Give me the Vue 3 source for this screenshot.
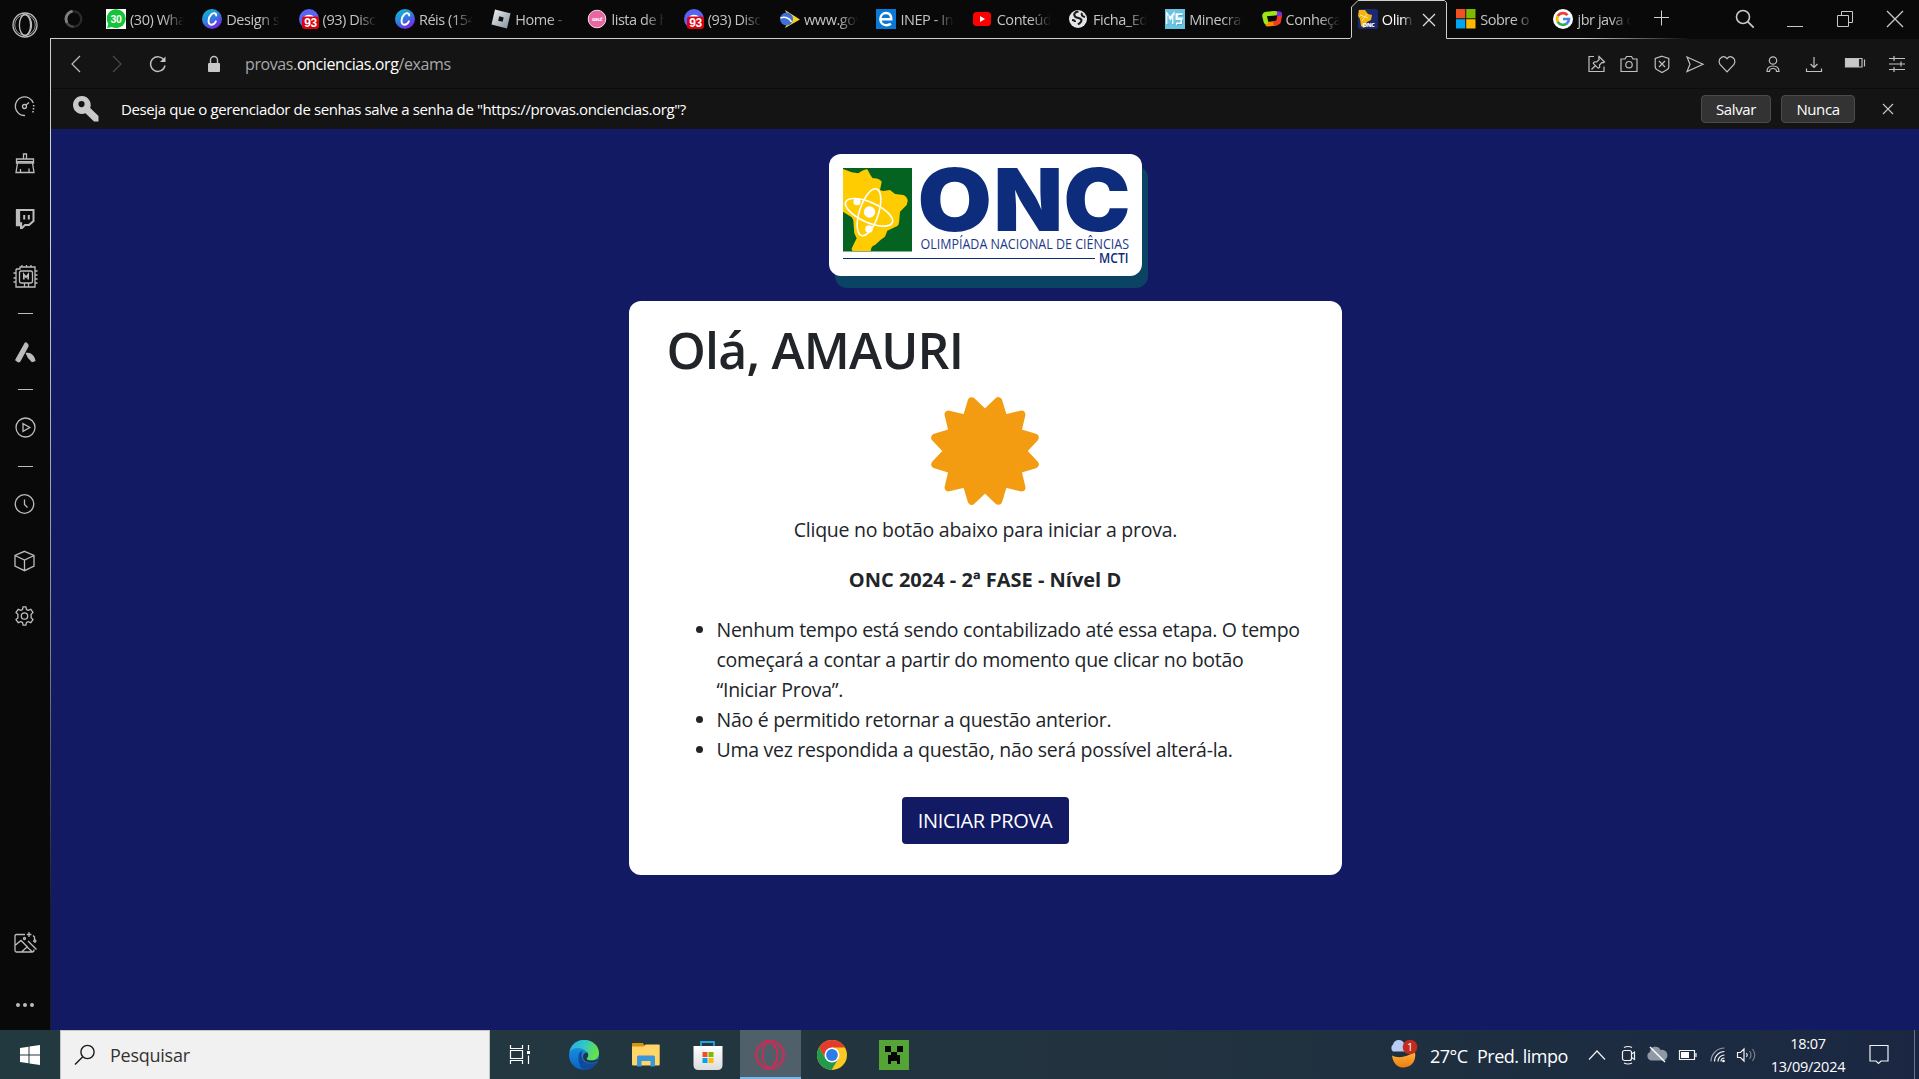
<script setup>
const tabs = [
  { icon: 'spinner', text: '', pinned: true },
  { icon: 'whats', text: '(30) Wha' },
  { icon: 'canva', text: 'Design s' },
  { icon: 'discord', text: '(93) Disc' },
  { icon: 'canva', text: 'Réis (154' },
  { icon: 'roblox', text: 'Home -' },
  { icon: 'osu', text: 'lista de h' },
  { icon: 'discord', text: '(93) Disc' },
  { icon: 'gov', text: 'www.gov' },
  { icon: 'inep', text: 'INEP - In' },
  { icon: 'youtube', text: 'Conteúd' },
  { icon: 'globe', text: 'Ficha_Ed' },
  { icon: 'ms', text: 'Minecraf' },
  { icon: 'conheca', text: 'Conheça' },
  { icon: 'onc', text: 'Olim', active: true },
  { icon: 'microsoft', text: 'Sobre o', late: true },
  { icon: 'google', text: 'jbr java d', last: true },
]

const canva = '<rect width="20" height="20" rx="10" fill="url(#cv)"/><path d="M14.200 6.500c.2-2.600-2.800-3.200-5-1C6 8.500 5.300 15.800 9.300 15.800c2.200 0 3.700-1.600 4.600-3.500" fill="none" stroke="#fff" stroke-width="1.900" stroke-linecap="round"/>'

const favicons = {
  spinner: '<circle cx="9.500" cy="10" r="7.800" fill="none" stroke="#2a2a2a" stroke-width="2.400"/><path d="M8.500 2.300a7.800 7.800 0 0 0 1 15.500" fill="none" stroke="#484848" stroke-width="2.600"/><path d="M8.500 2.300a7.800 7.800 0 0 0-5.500 11.500" fill="none" stroke="#808080" stroke-width="2.600"/>',
  whats: '<path d="M0 0h20v20H0z" fill="#fff"/><path d="M1 19l1.300-4.300A9.300 9.300 0 1 1 6 18z" fill="#16c43a"/><circle cx="10.300" cy="9.700" r="9.300" fill="#16c43a"/><text x="10" y="13.700" text-anchor="middle" font-family="Liberation Sans,sans-serif" font-weight="700" font-size="10.500" fill="#fff">30</text>',
  canva,
  discord: '<circle cx="10" cy="10" r="10" fill="#5865f2"/><path d="M5 8c2-3 8-3 10 0z" fill="#fff"/><rect x="3" y="7.500" width="17" height="12.500" rx="3" fill="#e00010"/><text x="11.500" y="17.700" text-anchor="middle" font-family="Liberation Sans,sans-serif" font-weight="700" font-size="12" fill="#fff">93</text>',
  roblox: '<path d="M4 .5l15.500 3.800L16 19.500.500 15.500z" fill="url(#rb)"/><path d="M8.300 7.300l4.400 1.100-1.100 4.400-4.400-1.100z" fill="#111"/>',
  osu: '<circle cx="10" cy="10" r="8.800" fill="#e967a1" stroke="#f6dbe8" stroke-width="1"/><text x="10" y="12" text-anchor="middle" font-family="Open Sans,sans-serif" font-weight="700" font-size="5.800" fill="#fff">osu!</text>',
  gov: '<path d="M5 1l15 9.500L5 19l4-9z" fill="#f5d328"/><circle cx="6.500" cy="10" r="6.500" fill="#3f6fd8"/><path d="M.5 9c4-1.800 9-.5 11 4" fill="none" stroke="#fff" stroke-width="1.600"/>',
  inep: '<path d="M0 0h20v20H0z" fill="#0a78d6"/><path d="M4.500 10.300h10.800c0-4.300-2.300-6.300-5.200-6.300-3.400 0-5.800 2.600-5.800 6 0 3.700 2.500 6.200 6.200 6.200 1.700 0 3.200-.5 4.400-1.400" fill="none" stroke="#fff" stroke-width="2.400"/>',
  youtube: '<rect x="0" y="3" width="18" height="14" rx="3.500" fill="#f00"/><path d="M7 7l5 3-5 3z" fill="#fff"/>',
  globe: '<circle cx="9" cy="10" r="9" fill="#e3e5e8"/><path d="M9.500 2.500c-4 .5-5.500 3-3 5.500 2.500 1.500 6 1 6 3.500 0 2-2 2.500-3.500 4M13 4c-1 2 .5 3.500 3 4M3 11c1.500 0 3 .5 3 2" fill="none" stroke="#1b1b1b" stroke-width="2.100"/>',
  ms: '<path d="M0 0h20v20H0z" fill="#6cc3e0"/><path d="M2.300 15V5.500l3 4 3-4V15M17.500 5.500h-5.800v4.200h5v5h-5.700" fill="none" stroke="#f4fbff" stroke-width="2.400"/><path d="M3 15.800V6.500M9 15.800V6.500M18.300 6.500h-5M17.500 10.500v5h-5.500" fill="none" stroke="#3ba0d0" stroke-width=".9"/>',
  conheca: '<g fill="none" stroke-width="4.600" stroke-linecap="round" stroke-linejoin="round"><path d="M14 14.300l-8.500 1" stroke="#ff8a00"/><path d="M17.700 6.500L16.500 13l-3 1.200" stroke="#f03a22"/><path d="M14 4.300l3.700.5" stroke="#7a2be8"/><path d="M4 13L2.500 7Q2.500 5.500 4.500 5L13 4.200" stroke="#9be615"/></g>',
  onc: '<rect width="20" height="20" rx="2.500" fill="#1b2872"/><path d="M1 1h6l3 4 4 1-1 5-4 2-3 6-3-2-1-7-2-3z" fill="#f6b50b"/><path d="M2 6l8 3M4 12l5-7" stroke="#fff3b8" stroke-width=".8"/><text x="4.500" y="17.500" font-family="Open Sans,sans-serif" font-weight="800" font-size="5.800" fill="#fff">ONC</text>',
  microsoft: '<path d="M0 0h9.300v9.300H0z" fill="#f25022"/><path d="M10.200 0h9.300v9.300h-9.300z" fill="#7fba00"/><path d="M0 10.200h9.300v9.300H0z" fill="#00a4ef"/><path d="M10.200 10.200h9.300v9.300h-9.300z" fill="#ffb900"/>',
  google: '<circle cx="10" cy="10" r="10" fill="#fff"/><g fill="none" stroke-width="2.700"><path d="M14.500 6.200A6 6 0 0 0 4.800 7.200" stroke="#ea4335"/><path d="M4.900 7a6 6 0 0 0 0 6" stroke="#fbbc05"/><path d="M4.800 12.900a6 6 0 0 0 9 1.600" stroke="#34a853"/><path d="M13.700 14.600A6 6 0 0 0 16 10h-6" stroke="#4285f4"/></g>',
}

const side = [
  { cls: 'opera', body: '<circle cx="13" cy="13" r="12"/><circle cx="13" cy="13" r="10.300" stroke-width=".8"/><ellipse cx="13" cy="13" rx="5.600" ry="10.500"/><path d="M15 3c6 5 6 15 0 20"/>' },
  { cls: 'speed', body: '<path d="M13 22.500A9.300 9.300 0 1 1 21.300 10"/><path d="M21.700 12v1.500M21.500 15v1.500M21 18v1.500" stroke-width="1.600"/><circle cx="12.500" cy="13.500" r="2"/><path d="M14 12l3-2.500"/>' },
  { cls: 'brush', body: '<path d="M11.500 8.500V4h3v4.500M4.500 13V9h17v4zM5.500 13L4 22.500h18L20.500 13M8.500 22v-3M17 22v-3.500" /><path d="M5 11.800h16" stroke-width="1.600"/>' },
  { cls: 'twitch', body: '<path d="M5 4h16.500v11l-4.500 4h-4l-3 3h-1v-3H5z" stroke-width="2"/><path d="M4.500 4v15.500h5V17H7.500V4z" fill="#bcbcbc"/><path d="M12.200 9v4.500M16.800 9v4.500" stroke-width="2"/>' },
  { cls: 'chip', body: '<path d="M3 5h4V3h15v20H3v-5M3 5v4M9 3V1M13.500 3V1M18 3V1M24.500 7H22M24.500 11H22M24.500 15H22M24.500 19H22M.500 9H3v9H.500M.500 14H3M11.500 19v4M15.500 19v4" /><rect x="6.500" y="7" width="13" height="12" rx="2"/><path d="M10.800 15.500v-5l2.200 2.700 2.200-2.700v5" stroke-width="1.700"/>' },
  { cls: 'dash d1' },
  { cls: 'flag', body: '<path d="M4 20.500L13 4.500q.6-1 1.600-.2l1.200 1.600q.5.8 0 1.600L8 22q-.6 1-1.600.6L4.200 21.500q-.5-.3-.2-1z" fill="#bcbcbc"/><path d="M14.500 14.500q5-.5 7.500 4.500l.8 2.500-2.700 1q-4-3-5.600-8z" fill="#bcbcbc"/>' },
  { cls: 'dash d2' },
  { cls: 'play', body: '<circle cx="13.500" cy="12.500" r="9.500"/><path d="M11 8.700v7.600l6.800-3.800z"/>' },
  { cls: 'dash d3' },
  { cls: 'clock', body: '<circle cx="12.500" cy="13" r="9.300"/><path d="M12.500 8.500v5l3 3"/>' },
  { cls: 'cube', body: '<path d="M12.500 3.300l9.500 4.200v10.700L12.500 22.700 3 18.200V7.500zM3 7.500l9.500 4.500L22 7.500M12.500 12v10.700"/>' },
  { cls: 'gear', body: '<path d="M10.500 6.500l.6-2.700h2.800l.6 2.700 1.600.9 2.700-1 2.200 3-1.900 1.900v3.400l1.900 1.900-2.200 3-2.700-1-1.600.9-.6 2.700h-2.800l-.6-2.700-1.600-.9-2.700 1-2.200-3 1.900-1.900v-3.400L4 9.400l2.200-3 2.700 1z"/><circle cx="12.500" cy="13" r="3.200"/>' },
  { cls: 'image', body: '<path d="M13 4.500H4.500Q3 4.500 3 6v14.500Q3 22 4.500 22H20q2 0 2-2v-.5M3.500 15l5.500-4.500 7 7M10 21.500l5-4.500 5 4.500M16 11l8.500 8.500M21 5.500l1.500 1.500v3M17 2v5M14.800 4.500h4.600M23 9v4M21 11h3.500"/><circle cx="12.500" cy="8.500" r="1" />' },
  { cls: 'dots', body: '<g fill="#bcbcbc" stroke="none"><circle cx="6" cy="13" r="2"/><circle cx="13" cy="13" r="2"/><circle cx="20" cy="13" r="2"/></g>' },
]

const actions = [
  { cls: 'a-pin', body: '<path d="M9 4.500H4v15h15v-5"/><path d="M14 4.500l5.500 5.500-1.300.8-1.200-.4-2.500 2.600.2 2.300-1.500 1-5-5 1.200-1.500 2.300.2 2.500-2.500-.5-1.500zM10.500 13.500L6.500 17.500"/>' },
  { cls: 'a-cam', body: '<path d="M4 7h4l1.500-2.500h5L16 7h4v12.500H4z"/><circle cx="12" cy="12.700" r="3.200"/>' },
  { cls: 'a-shield', body: '<path d="M12 4.200l6.800 2.300v8.500q0 1.500-1.500 2.500L12 20.500 6.700 17.500Q5.200 16.500 5.200 15V6.500z"/><path d="M9 9l6 6M15 9l-6 6"/>' },
  { cls: 'a-send', body: '<path d="M4 5l16 7.300L4 19.500l3-7.200z"/>' },
  { cls: 'a-heart', body: '<path d="M12 19.800L5 12.500Q3.500 9.500 4.600 7.200 8.500 2.300 12 6.700q3.500-4.400 7.400.5 1.100 2.300-.4 5.300z"/>' },
  { cls: 'a-user', body: '<circle cx="12" cy="8.500" r="3.700"/><path d="M6 19.500q0-5.500 6-5.500t6 5.500h-2.500q0-3-3.500-3t-3.500 3z"/>' },
  { cls: 'a-down', body: '<path d="M12 5v10.500M8.500 12l3.500 3.500L15.500 12M4.500 16.500v3h15v-3"/>' },
  { cls: 'a-batt', body: '<path d="M1.500 6.500h13v8.500h-13z" fill="#c8c8c8"/><path d="M15 6.500h3v8.500h-3M20.500 7.500v7" />' },
  { cls: 'a-slide', body: '<path d="M4 6.500h16M4 12h16M4 17.500h16M9 4v5M16 9.500v5M9 15v5"/>' },
]

// Twelve-pointed badge: tips sit 15° off the axes, notches lie on them.
const badge = Array.from({ length: 24 }, (_, i) => {
  const a = (i * 15 * Math.PI) / 180
  const r = i % 2 ? 51.5 : 37.2
  return `${(55 + r * Math.sin(a)).toFixed(2)},${(55 - r * Math.cos(a)).toFixed(2)}`
}).join(' ')
</script>

<template>
  <div class="desktop">
    <svg class="defs" width="0" height="0">
      <defs>
        <linearGradient id="cv" x1="0" y1="0" x2=".6" y2="1"><stop offset="0" stop-color="#08c4cf" /><stop offset=".5" stop-color="#2a86e0" /><stop offset="1" stop-color="#7228e6" /></linearGradient>
        <linearGradient id="rb" x1="0" y1="0" x2="1" y2="1"><stop offset="0" stop-color="#f2f4f6" /><stop offset="1" stop-color="#7f8d99" /></linearGradient>
        <linearGradient id="edgeA" x1="0" y1="0" x2="1" y2=".3"><stop offset="0" stop-color="#2ba7e8" /><stop offset=".5" stop-color="#2fc6c9" /><stop offset="1" stop-color="#63e14c" /></linearGradient>
        <linearGradient id="edgeB" x1="0" y1="0" x2="0" y2="1"><stop offset="0" stop-color="#1ba0e4" /><stop offset="1" stop-color="#0b62c8" /></linearGradient>
        <linearGradient id="moon" x1="0" y1="0" x2="0" y2="1"><stop offset="0" stop-color="#ffb43c" /><stop offset="1" stop-color="#ee7d10" /></linearGradient>
        <linearGradient id="bag" x1="0" y1="0" x2="0" y2="1"><stop offset="0" stop-color="#fff" /><stop offset="1" stop-color="#dcdcdc" /></linearGradient>
      </defs>
    </svg>

    <div class="window">
      <aside class="sidebar">
        <div v-for="(s, i) in side" :key="i" class="side-item" :class="s.cls">
          <svg v-if="s.body" viewBox="0 0 26 26" width="26" height="26" v-html="s.body"></svg>
        </div>
      </aside>

      <div class="browser">
        <div class="tabstrip">
          <div class="tabs">
            <div v-for="(t, i) in tabs" :key="i" class="tab" :class="{ pinned: t.pinned, active: t.active, late: t.late, last: t.last }">
              <svg v-if="t.active" class="outline" width="97" height="39" viewBox="0 0 97 39">
                <path d="M0 39.500V38.500L1.500 37V7L8 .5h86.500L96.500 2.500V38.500H97V39.500z" fill="#141414" />
                <path d="M0 38.500L1.500 37V7L8 .5h86.500L96.500 2.500V38.500" fill="none" stroke="#cfcfcf" />
              </svg>
              <svg class="fav" width="20" height="20" viewBox="0 0 20 20" v-html="favicons[t.icon]"></svg>
              <span class="tab-text">{{ t.text }}</span>
              <svg v-if="t.active" class="tab-x" width="14" height="14" viewBox="0 0 14 14"><path d="M1 1l12 12M13 1L1 13" /></svg>
            </div>
            <svg class="plus" width="16" height="16" viewBox="0 0 16 16"><path d="M7.500 .5v15M0 7.500h15" /></svg>
          </div>
          <div class="controls">
            <svg width="20" height="20" viewBox="0 0 20 20"><circle cx="8" cy="8" r="6.500" stroke-width="1.600" /><path d="M12.700 12.700l6 6" stroke-width="1.800" /></svg>
            <svg width="20" height="20" viewBox="0 0 20 20"><path d="M2 17.500h16" /></svg>
            <svg width="20" height="20" viewBox="0 0 20 20"><path d="M2.500 6.500h11v11h-11zM6.500 6V2.500h11v11H14" /></svg>
            <svg width="20" height="20" viewBox="0 0 20 20"><path d="M2 2l16 16M18 2L2 18" stroke-width="1.300" /></svg>
          </div>
        </div>

        <div class="address">
          <svg class="back" width="18" height="18" viewBox="0 0 18 18"><path d="M13 1L5 9l8 8" /></svg>
          <svg class="fwd" width="18" height="18" viewBox="0 0 18 18"><path d="M5 1l8 8-8 8" /></svg>
          <svg class="reload" width="18" height="18" viewBox="0 0 18 18"><path d="M15.200 5.500A7.300 7.300 0 1 0 16 10.500" stroke-width="1.400" /><path d="M16.500 1.500v5.500H11z" fill="#c8c8c8" stroke="none" /></svg>
          <svg class="lock" width="14" height="18" viewBox="0 0 14 18"><rect x="1" y="8" width="12" height="9" rx="1" fill="#c8c8c8" stroke="none" /><path d="M3.500 8V5a3.500 3.500 0 0 1 7 0v3" stroke-width="1.400" /></svg>
          <span class="url">provas.<b>onciencias.org</b>/exams</span>
          <div class="actions">
            <svg v-for="a in actions" :key="a.cls" :class="a.cls" width="24" height="24" viewBox="0 0 24 24" v-html="a.body"></svg>
          </div>
        </div>

        <div class="infobar">
          <svg class="key" width="28" height="28" viewBox="0 0 28 28"><path d="M10 1a9 9 0 1 0 3.500 17.300L22 26.500h4.500V21l-8.300-8A9 9 0 0 0 10 1zM9.500 6a3 3 0 1 1 0 6.200 3 3 0 0 1 0-6.200z" fill="#c9c9c9" fill-rule="evenodd" /></svg>
          <span class="ask">Deseja que o gerenciador de senhas salve a senha de "https://provas.onciencias.org"?</span>
          <button class="ib save">Salvar</button>
          <button class="ib never">Nunca</button>
          <svg class="ib-x" width="12" height="12" viewBox="0 0 12 12"><path d="M1 1l10 10M11 1L1 11" /></svg>
        </div>

        <main class="page">
          <div class="logo">
            <svg width="313" height="122" viewBox="0 0 313 122">
              <rect x="14" y="14" width="69" height="83.500" fill="#046320" />
              <path d="M14 15L22.700 18.300 29.300 19.300Q35 15.500 38.300 15.300L42 22 43.700 24.300Q50 23.500 52.700 27.700L51 36 54 37 61 36 66 40 74.300 41Q78.500 43 78.700 46.700L77.700 51 71 57.700 70.300 66Q70 71 68.300 72L58.300 76.700 56 82.700 51.500 86 46 91Q42 92 41.700 97L23.500 97 22.500 95 24.300 91 27.700 84.300 25.300 79.300 24.300 66 22.700 63.300 14 57.700z" fill="#ffcc02" />
              <g fill="none" stroke="#fff" stroke-width="1.600">
                <ellipse cx="40" cy="58.300" rx="9.500" ry="24.500" transform="rotate(18 40 58.300)" />
                <ellipse cx="40" cy="58.300" rx="10" ry="25.500" transform="rotate(-66 40 58.300)" />
              </g>
              <g fill="#fff"><circle cx="40.500" cy="58" r="5.700" /><circle cx="28" cy="47.700" r="3.600" /><circle cx="40" cy="75" r="3.800" /></g>
              <g class="onc">
                <text x="88.500" y="76.500" textLength="74.500" lengthAdjust="spacingAndGlyphs">O</text>
                <text x="164.500" y="76.500" textLength="69.500" lengthAdjust="spacingAndGlyphs">N</text>
                <text x="234.500" y="76.500" textLength="67" lengthAdjust="spacingAndGlyphs">C</text>
              </g>
              <text class="tag" x="91.500" y="94.500" textLength="208.500" lengthAdjust="spacingAndGlyphs">OLIMPÍADA NACIONAL DE CIÊNCIAS</text>
              <text class="mcti" x="270" y="109" textLength="29.500" lengthAdjust="spacingAndGlyphs">MCTI</text>
              <path d="M14 104.500h252" stroke="#0d2d7c" stroke-width="1" />
            </svg>
          </div>

          <section class="card">
            <h1>Olá, AMAURI</h1>
            <svg class="badge" width="110" height="110" viewBox="0 0 110 110"><polygon :points="badge" fill="#f39c12" stroke="#f39c12" stroke-width="8" stroke-linejoin="round" /></svg>
            <p class="lead">Clique no botão abaixo para iniciar a prova.</p>
            <p class="exam">ONC 2024 - 2ª FASE - Nível D</p>
            <ul>
              <li>Nenhum tempo está sendo contabilizado até essa etapa. O tempo<br>começará a contar a partir do momento que clicar no botão<br>“Iniciar Prova”.</li>
              <li>Não é permitido retornar a questão anterior.</li>
              <li>Uma vez respondida a questão, não será possível alterá-la.</li>
            </ul>
            <button class="start">INICIAR PROVA</button>
          </section>
        </main>
      </div>
    </div>

    <footer class="taskbar">
      <div class="win"><svg width="20" height="20" viewBox="0 0 20 20"><path d="M0 3l8.500-1.300v7.800H0zM9.500 1.500L20 0v9.500H9.500zM0 10.500h8.500v7.800L0 17zM9.500 10.500H20V20L9.500 18.500z" fill="#fff" /></svg></div>
      <div class="search">
        <svg width="22" height="22" viewBox="0 0 22 22"><circle cx="13.500" cy="8" r="6.600" /><path d="M8.800 12.700L1 20.500" /></svg>
        <span>Pesquisar</span>
      </div>
      <div class="apps">
        <div class="app tv"><svg width="30" height="30" viewBox="0 0 30 30" fill="none" stroke="#fff" stroke-width="1.200"><path d="M5.500 5v3.500h12V5M5.500 24v-3.500h12V24M5.500 10.500h12v8h-12zM23.500 5v5M23.500 15.500v8.500" /><path d="M22 11h3v3h-3z" fill="#fff" stroke="none" /></svg></div>
        <div class="app"><svg width="30" height="30" viewBox="0 0 30 30">
          <circle cx="15" cy="15" r="15" fill="url(#edgeB)" />
          <path d="M.5 12C2 4 8 0 15 0c9 0 15 6 15 13 0 5-4 7.500-8 7.500-3 0-5-1-4.500-2.300 1.800-1.500 2-4 .5-6C13 6.500 4 7 .5 12z" fill="url(#edgeA)" />
          <path d="M9.500 16c0-3 2-5 4.500-5.500-3 3.500-2 13 7.500 13 3 0 5-1 6.500-1.800C24 29 18 31 14 29.500 11 27 9 22 9.500 16z" fill="#104a98" />
          <path d="M17.500 18.500c2-1.500 2.300-4 .8-6-4 0-5.500 4-3 7.500 3 3.500 9 3.500 13 1l1.700-2-4 1c-4 1.200-8 .5-8.500-1.500z" fill="#23373f" />
        </svg></div>
        <div class="app"><svg width="30" height="30" viewBox="0 0 30 30"><path d="M1 4q0-1 1-1h10l2 3.500v2H1z" fill="#d89508" /><path d="M1 6.500h11.500l2-2H28q.7 0 .7.700V24.500q0 1-1 1H2q-1 0-1-1z" fill="#ffd667" /><path d="M6 26.500V17q0-1.500 1.500-1.500h15Q24 15.500 24 17v9.500h-4.500V21h-9v5.500z" fill="#3c96da" /></svg></div>
        <div class="app"><svg width="30" height="30" viewBox="0 0 30 30"><path d="M8 7V2h13v5" fill="none" stroke="#20a4e4" stroke-width="1.800" /><path d="M.5 6h29v19q0 5-5 5H5.500q-5 0-5-5z" fill="url(#bag)" /><path d="M9.500 12h5v5h-5z" fill="#f25022" /><path d="M15.500 12h5v5h-5z" fill="#7fba00" /><path d="M9.500 18h5v5h-5z" fill="#00a4ef" /><path d="M15.500 18h5v5h-5z" fill="#ffb900" /></svg></div>
        <div class="app on"><svg width="30" height="30" viewBox="0 0 30 30" fill="none" stroke="#e8214f" stroke-width="1.300"><circle cx="15" cy="15" r="14.300" /><circle cx="15" cy="15" r="12.600" stroke-width=".8" /><ellipse cx="15" cy="15" rx="7.500" ry="12.700" /><path d="M18 5.500c6 5 6 14 0 19" /></svg></div>
        <div class="app"><svg width="30" height="30" viewBox="0 0 30 30"><circle cx="15" cy="15" r="15" fill="#fdc81f" /><path d="M2 7.500A15 15 0 0 1 28 7.500H15L9 19z" fill="#e33b2e" /><path d="M2 7.500A15 15 0 0 0 14.500 30L21.300 18.700 8.700 18.700z" fill="#229a4b" /><circle cx="15" cy="15" r="7.500" fill="#fff" /><circle cx="15" cy="15" r="5.900" fill="#2d7de9" /></svg></div>
        <div class="app"><svg width="30" height="30" viewBox="0 0 30 30"><path d="M0 0h30v30H0z" fill="#54a436" /><path d="M6 6h6v6H6zM18 6h6v6h-6zM12 12h6v3h3v9h-3v-3h-6v3H9v-9h3z" fill="#050505" /></svg></div>
      </div>
      <div class="tray">
        <svg class="weather" width="32" height="32" viewBox="0 0 32 32"><path d="M4 16.500c7 3.500 15 1 23-3.500C29 24 21 29 14.500 28.500 9 28 5 24 4 16.500z" fill="url(#moon)" /><path d="M5 12.500a4.500 4.500 0 0 1 0-7 6 6 0 0 1 11-1.500l2 8.500z" fill="#b9cdf5" /><circle cx="22" cy="8" r="7.300" fill="#c42b1c" /><text x="22" y="12" text-anchor="middle" font-family="Open Sans,sans-serif" font-size="11.500" fill="#fff">1</text></svg>
        <span class="temp">27°C</span><span class="pred">Pred. limpo</span>
        <svg class="chev" width="18" height="12" viewBox="0 0 18 12"><path d="M1 10.500L9 2l8 8.500" /></svg>
        <svg class="meet" width="18" height="20" viewBox="0 0 18 20"><rect x="2.500" y="5.500" width="9" height="10" rx="2" /><path d="M11.500 9l3-2v7.500l-3-2M4 2.500q4-2 8 0M4 18q4 2 8 0" /></svg>
        <svg class="cloud" width="22" height="20" viewBox="0 0 22 20"><path d="M5 15.500a4.500 4.500 0 0 1-1-8.500 5.500 5.500 0 0 1 10.500-2A5.300 5.300 0 0 1 17.500 15.500z" fill="#8f98a5" stroke="none" /><path d="M4 2l15 15" stroke="#fff" stroke-width="1.400" /></svg>
        <svg class="bat" width="20" height="14" viewBox="0 0 20 14"><path d="M1.500 2.500h15v9h-15zM18 5v4" /><path d="M3 4h8v6H3z" fill="#fff" stroke="none" /></svg>
        <svg class="wifi" width="16" height="18" viewBox="0 0 16 18"><path d="M1 15.500A13.500 13.500 0 0 1 14.500 2" stroke="#8f98a5" /><path d="M4.500 15.500a10 10 0 0 1 10-10M8 15.500a6.500 6.500 0 0 1 6.500-6.500M11 15.500a3.500 3.500 0 0 1 3.500-3.500" /><circle cx="13.500" cy="15" r="1.300" fill="#fff" stroke="none" /></svg>
        <svg class="vol" width="22" height="18" viewBox="0 0 22 18"><path d="M1.500 6.500h3L8 3v12l-3.500-3.500h-3zM10.500 7q1.500 2 0 4" /><path d="M13.500 5q3 4 0 8M16.500 3q4.500 6 0 12" stroke="#78828f" /></svg>
        <div class="clockbox"><span>18:07</span><span>13/09/2024</span></div>
        <svg class="note" width="20" height="22" viewBox="0 0 20 22"><path d="M1 1.500h18v15.500h-7L9.500 19.500 7 17H1z" /></svg>
        <div class="peek"></div>
      </div>
    </footer>
  </div>
</template>

<style>
body { margin: 0; background: #111a63; overflow: hidden; }
</style>

<style scoped>
.desktop { width: 1919px; height: 1079px; display: flex; flex-direction: column; overflow: hidden; font-family: "Open Sans", "Noto Sans", sans-serif; color: #fff; }
.desktop * { box-sizing: border-box; }
svg { display: block; flex: none; overflow: visible; }
.defs { position: absolute; }
.window { height: 1030px; display: flex; background: #090909; }

.sidebar { width: 51px; flex: none; padding-left: 12px; background: linear-gradient(#cfcfcf, #cfcfcf 20%, #8a8a8a 60%, #1c1c1c 88%) 50px 38px / 1px 992px no-repeat #090909; }
.side-item svg { fill: none; stroke: #bcbcbc; stroke-width: 1.3; }
.side-item { width: 26px; height: 26px; }
.opera { margin-top: 12px; }
.speed { margin-top: 55px; }
.brush { margin-top: 31px; }
.twitch { margin-top: 30px; }
.chip { margin-top: 32px; margin-left: 1px; }
.dash { width: 15px; height: 1px; margin-left: 6px; background: #bcbcbc; }
.d1 { margin-top: 23px; }
.flag { margin-top: 25px; }
.d2 { margin-top: 24px; }
.play { margin-top: 25px; }
.d3 { margin-top: 25px; }
.clock { margin-top: 24px; }
.cube { margin-top: 31px; }
.gear { margin-top: 29px; }
.image { margin-top: 301px; }
.dots { margin-top: 36px; }

.browser { flex: 1; display: flex; flex-direction: column; min-width: 0; }
.tabstrip { height: 39px; flex: none; display: flex; justify-content: space-between; background: linear-gradient(90deg, #cfcfcf 1530px, transparent 1640px) 0 38px / 100% 1px no-repeat #090909; }
.tabs { display: flex; padding-left: 6px; }
.tab { position: relative; width: 96.3px; height: 39px; padding: 9px 0 0 6px; display: flex; gap: 4px; font-size: 14.5px; line-height: 21px; letter-spacing: -.45px; color: #c4c4c4; white-space: nowrap; }
.tab.pinned { width: 43px; padding-left: 7px; }
.tab.late { padding-left: 8px; }
.tab.last { padding-left: 9px; }
.fav { position: relative; z-index: 1; }
.tab-text { position: relative; z-index: 1; width: 57px; overflow: hidden; -webkit-mask-image: linear-gradient(90deg, #000 60%, transparent 95%); mask-image: linear-gradient(90deg, #000 60%, transparent 95%); }
.tab.active { color: #fff; }
.active .tab-text { width: 33px; }
.outline { position: absolute; left: -2px; top: 0; }
.tab-x { position: relative; z-index: 1; margin: 4px 0 0 3px; fill: none; stroke: #ddd; stroke-width: 1.3; }
.plus { margin: 10px 0 0 13px; fill: none; stroke: #d0d0d0; }
.controls { display: flex; gap: 30px; padding: 9px 14px 0 0; }
.controls svg { fill: none; stroke: #c9c9c9; }

.address { height: 50px; flex: none; display: flex; align-items: center; background: #141414; border-bottom: 1px solid #0c0c0c; padding-left: 16px; }
.address svg { fill: none; stroke: #c0c0c0; stroke-width: 1.2; }
.fwd { margin-left: 23px; }
.address .fwd { stroke: #4a4a4a; }
.reload { margin-left: 23px; }
.lock { margin-left: 40px; }
.url { margin-left: 24px; font-size: 16px; letter-spacing: -.4px; color: #a8a8a8; white-space: nowrap; }
.url b { font-weight: 400; color: #fff; }
.actions { margin-left: auto; display: flex; padding-right: 10px; }
.a-cam { margin-left: 8px; }
.a-shield, .a-send { margin-left: 9px; }
.a-heart { margin-left: 8px; }
.a-user { margin-left: 22px; }
.a-down, .a-slide { margin-left: 17px; }
.a-batt { margin-left: 18px; }

.infobar { height: 40px; flex: none; display: flex; align-items: center; background: #141414; padding-left: 21px; }
.ask { margin-left: 21px; font-size: 15px; letter-spacing: -.39px; white-space: nowrap; }
.ib { height: 28px; border: 1px solid #4b4b4b; border-radius: 4px; background: #333; color: #fff; font: 15px/24px "Open Sans", sans-serif; letter-spacing: -.4px; padding: 0; }
.save { width: 70px; margin-left: auto; }
.never { width: 74px; margin-left: 10px; }
.ib-x { margin: 0 25px 0 27px; fill: none; stroke: #c9c9c9; stroke-width: 1.1; }

.page { flex: 1; background: #111a63; padding-top: 25px; display: flex; flex-direction: column; align-items: center; }
.logo { width: 313px; height: 122px; border-radius: 12px; background: #fff; box-shadow: 6px 12px 0 #0a4364; }
.onc { font: 900 86px Inter, sans-serif; fill: #0d2d7c; }
.tag { font: 400 14px "Open Sans", sans-serif; fill: #1c3a86; }
.mcti { font: 600 14px "Open Sans", sans-serif; fill: #0d2d7c; }
.card { width: 713px; height: 574px; margin-top: 25px; border-radius: 12px; background: #fff; color: #212529; display: flex; flex-direction: column; align-items: center; font-size: 19.500px; line-height: 30px; white-space: nowrap; }
h1 { margin: 19px 0 0 38px; align-self: flex-start; font-size: 50px; line-height: 60px; font-weight: 600; letter-spacing: -.8px; }
.badge { margin: 16px 0 0; }
.lead { margin: 9px 0 0 1px; letter-spacing: -.25px; }
.exam { margin: 20px 0 0; font-size: 20px; font-weight: 700; letter-spacing: 0; }
ul { align-self: flex-start; margin: 20px 0 0 38px; padding-left: 50px; letter-spacing: -.28px; }
.start { margin-top: 32px; width: 167px; height: 47px; border: 0; border-radius: 4px; background: #111a63; color: #fff; font: 400 20px/44px "Open Sans", sans-serif; letter-spacing: -.35px; padding: 0; }

.taskbar { height: 49px; display: flex; background: linear-gradient(90deg, #233940, #22363f 40%, #22323f 60%, #1e2f40 75%, #1b2742); }
.win { width: 60px; padding: 15px 0 0 20px; }
.search { width: 430px; background: #f1f1f1; border: 1px solid #c4c4c4; border-bottom: 0; display: flex; align-items: center; padding-left: 13px; color: #333; font-size: 18px; letter-spacing: -.25px; }
.search svg { fill: none; stroke: #1a1a1a; stroke-width: 1.400; }
.search span { margin-left: 14px; }
.apps { display: flex; }
.app { width: 62px; padding: 10px 0 0 17px; }
.app.tv { padding-left: 15px; }
.app.on { background: #4f606a; border-bottom: 2px solid #76b9ed; width: 61px; margin: 0 -1px 0 2px; padding-left: 15px; }
.tray { margin-left: auto; display: flex; }
.tray svg { fill: none; stroke: #f2f2f2; stroke-width: 1.200; }
.tray .weather { margin: 9px 0 0; stroke: none; }
.temp, .pred { font-size: 18px; line-height: 26px; margin-top: 13px; white-space: nowrap; letter-spacing: -.5px; }
.temp { margin-left: 10px; width: 35px; }
.pred { margin-left: 12px; width: 86px; }
.chev { margin: 19px 0 0 25px; }
.meet { margin: 15px 0 0 14px; }
.cloud { margin: 15px 0 0 8px; }
.bat { margin: 18px 0 0 10px; }
.wifi { margin: 16px 0 0 12px; }
.vol { margin: 16px 0 0 10px; }
.clockbox { width: 76px; margin-left: 12px; display: flex; flex-direction: column; align-items: center; font-size: 14.500px; line-height: 23px; letter-spacing: -.25px; padding-top: 2px; }
.note { margin: 14px 0 0 23px; }
.peek { width: 1px; height: 49px; margin: 0 4px 0 25px; background: #6d7686; }
</style>
